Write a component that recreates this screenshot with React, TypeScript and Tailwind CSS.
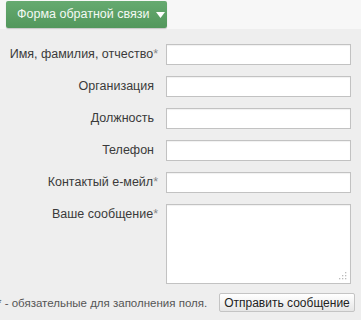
const fields = [
  { label: "Имя, фамилия, отчество", required: true },
  { label: "Организация", required: false },
  { label: "Должность", required: false },
  { label: "Телефон", required: false },
  { label: "Контактый е-мейл", required: true },
];

const Label = ({ text, required }: { text: string; required: boolean }) => (
  <span className={required ? "whitespace-nowrap text-[#3a3a3a]" : "whitespace-nowrap pr-[4px] text-[#3a3a3a]"}>
    {text}
    {required && <span className="text-[#888]">*</span>}
  </span>
);

export default function App() {
  return (
    <div
      className="w-[361px] h-[320px] overflow-hidden bg-[#eeeeee] text-[12.5px] leading-[15px]"
      style={{ fontFamily: '"Liberation Sans", Arial, sans-serif' }}
    >
      <div className="h-[29px] bg-[#f7f7f7] pl-[6px] pt-[1px]">
        <div className="inline-flex h-[27px] w-[161px] items-center gap-[7px] whitespace-nowrap rounded-[2px] bg-gradient-to-b from-[#66aa70] to-[#52975c] pl-[11px] text-[#f4f9f4] shadow-[0_1px_1px_rgba(0,0,0,0.2)]">
          <span>Форма обратной связи</span>
          <svg width="9" height="6" viewBox="0 0 9 6">
            <path d="M0 0h9L4.5 6z" fill="#fff" />
          </svg>
        </div>
      </div>

      <div className="flex flex-col gap-[11px] pt-[15px]">
        {fields.map((f) => (
          <div key={f.label} className="flex h-[21px] items-center">
            <div className="w-[159px] pr-[1px] text-right">
              <Label text={f.label} required={f.required} />
            </div>
            <input
              className="ml-[7px] h-[21px] w-[185px] border border-[#c2c2c2] bg-white shadow-[inset_0_1px_1px_rgba(0,0,0,0.06)] outline-none"
              type="text"
            />
          </div>
        ))}
        <div className="flex items-start">
          <div className="w-[159px] pr-[1px] pt-[3px] text-right">
            <Label text="Ваше сообщение" required />
          </div>
          <div className="relative ml-[7px]">
            <textarea className="block h-[80px] w-[185px] resize-none border border-[#c2c2c2] bg-white shadow-[inset_0_1px_1px_rgba(0,0,0,0.06)] outline-none" />
            <svg className="absolute bottom-[4px] right-[4px]" width="8" height="8" viewBox="0 0 8 8">
              <g fill="#bbb">
                <rect x="6" y="0" width="1.3" height="1.3" />
                <rect x="3" y="3" width="1.3" height="1.3" />
                <rect x="6" y="3" width="1.3" height="1.3" />
                <rect x="0" y="6" width="1.3" height="1.3" />
                <rect x="3" y="6" width="1.3" height="1.3" />
                <rect x="6" y="6" width="1.3" height="1.3" />
              </g>
            </svg>
          </div>
        </div>
      </div>

      <div className="mt-[9px] flex h-[19px] items-center pl-[1px]">
        <span className="-ml-[4px] whitespace-nowrap text-[11.5px] leading-[14px] text-[#555]">* - обязательные для заполнения поля.</span>
        <button className="ml-auto mr-[6px] h-[19px] w-[136px] whitespace-nowrap rounded-[2px] border border-[#c4c4c4] bg-gradient-to-b from-[#ffffff] to-[#e6e6e6] text-[12px] leading-[14px] text-[#222]">
          Отправить сообщение
        </button>
      </div>
    </div>
  );
}
